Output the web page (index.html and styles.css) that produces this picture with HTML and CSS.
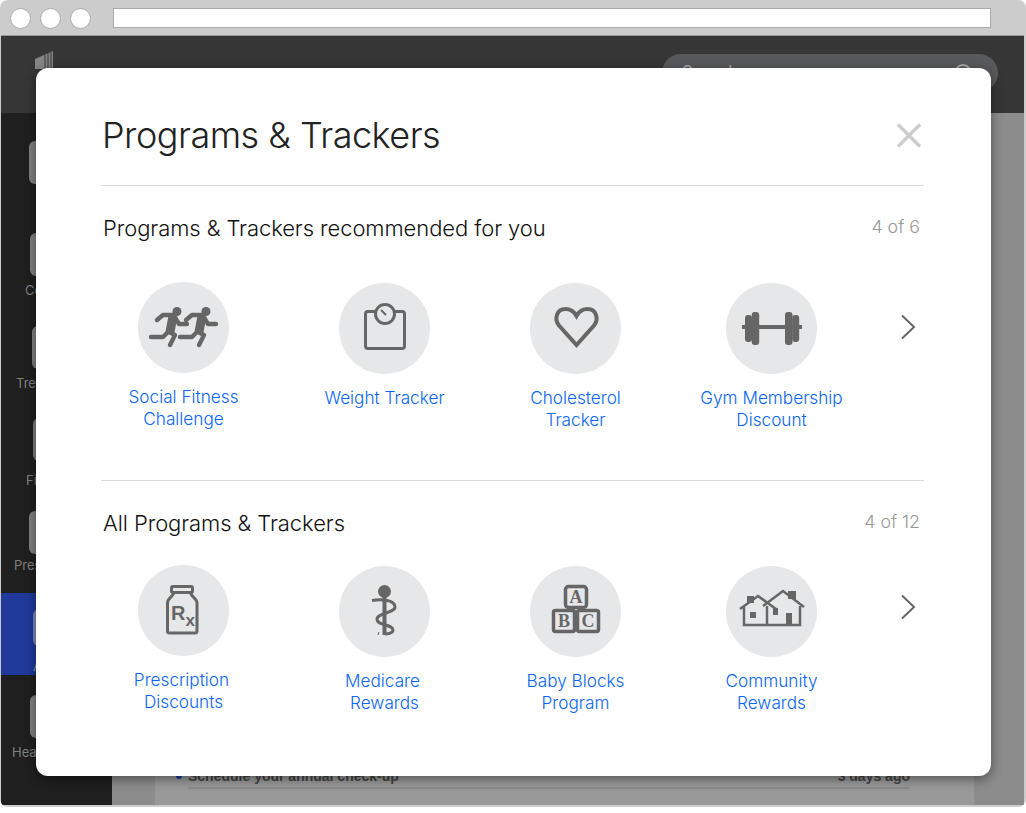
FILE: index.html
```html
<!DOCTYPE html>
<html lang="en">
<head>
    <meta charset="UTF-8">
    <meta name="viewport" content="width=device-width, initial-scale=1.0">
    <title>Programs &amp; Trackers</title>
    <link rel="stylesheet" href="styles.css">
</head>
<body>
    <div class="frame">
        <div class="chrome">
            <div class="dots">
                <span class="dot"></span>
                <span class="dot"></span>
                <span class="dot"></span>
            </div>
            <div class="url-bar"></div>
        </div>

        <div class="window">
            <header class="topbar">
                <svg class="logo" width="20" height="18" viewBox="0 0 20 18">
                    <polygon points="0,8 18,0 18,18 0,18" fill="#858585"/>
                    <path d="M10 4V18M13 2V18M16 1V18" stroke="#363637" stroke-width="1"/>
                </svg>
                <div class="search">
                    <span class="search-text">Search</span>
                    <span class="search-glass"></span>
                </div>
            </header>

            <div class="workspace">
                <nav class="sidebar">
                    <div class="nav-item nav-a"><span class="nav-icon"></span><span class="nav-label"></span></div>
                    <div class="nav-item nav-b"><span class="nav-icon"></span><span class="nav-label">Co</span></div>
                    <div class="nav-item nav-c"><span class="nav-icon"></span><span class="nav-label">Tre</span></div>
                    <div class="nav-item nav-d"><span class="nav-icon"></span><span class="nav-label">Fi</span></div>
                    <div class="nav-item nav-e"><span class="nav-icon"></span><span class="nav-label">Pres</span></div>
                    <div class="nav-item nav-active"><span class="nav-icon"></span><span class="nav-label">A</span></div>
                    <div class="nav-item nav-f"><span class="nav-icon"></span><span class="nav-label">Hea</span></div>
                </nav>
                <main class="content">
                    <div class="panel">
                        <div class="task">
                            <span class="task-dot"></span>
                            <span class="task-name">Schedule your annual check-up</span>
                            <span class="task-date">3 days ago</span>
                        </div>
                    </div>
                </main>
            </div>
        </div>

        <div class="modal">
            <div class="modal-head">
                <h1>Programs &amp; Trackers</h1>
                <svg class="close" width="26" height="25" viewBox="0 0 26 25">
                    <path d="M2 1.500L24 23.500M24 1.500L2 23.500" stroke="#ccc" stroke-width="3.200" fill="none"/>
                </svg>
            </div>

            <section class="section">
                <div class="section-head">
                    <h2>Programs &amp; Trackers recommended for you</h2>
                    <span class="count">4 of 6</span>
                </div>
                <div class="row">
                    <div class="grid">
                        <div class="item">
                            <div class="circle">
                                <svg width="91" height="91" viewBox="0 0 91 91">
                                    <g fill="none" stroke="#666" stroke-width="4.400" stroke-linecap="round" stroke-linejoin="round">
                                        <circle cx="39" cy="29.500" r="4.500" fill="#666" stroke="none"/>
                                        <path d="M19 38L25 33H36"/>
                                        <path d="M35 34L32 50" stroke-width="9" stroke-linecap="butt"/>
                                        <path d="M36 34L41 42H49"/>
                                        <path d="M33 47L25 55H13"/>
                                        <path d="M31 50L37 53L32 63"/>
                                    </g>
                                    <g fill="none" stroke="#666" stroke-width="4.400" stroke-linecap="round" stroke-linejoin="round" transform="translate(29 0)">
                                        <circle cx="39" cy="29.500" r="4.500" fill="#666" stroke="none"/>
                                        <path d="M19 38L25 33H36"/>
                                        <path d="M35 34L32 50" stroke-width="9" stroke-linecap="butt"/>
                                        <path d="M36 34L41 42H49"/>
                                        <path d="M33 47L25 55H13"/>
                                        <path d="M31 50L37 53L32 63"/>
                                    </g>
                                </svg>
                            </div>
                            <a class="label">Social Fitness<br>Challenge</a>
                        </div>
                        <div class="item">
                            <div class="circle">
                                <svg width="91" height="91" viewBox="0 0 91 91">
                                    <rect x="26.500" y="28.500" width="39" height="37" rx="2.500" fill="none" stroke="#666" stroke-width="3"/>
                                    <circle cx="46" cy="31" r="9.500" fill="#e6e7e8" stroke="#666" stroke-width="3"/>
                                    <path d="M42 27L47 32" stroke="#666" stroke-width="2"/>
                                </svg>
                            </div>
                            <a class="label">Weight Tracker</a>
                        </div>
                        <div class="item">
                            <div class="circle">
                                <svg width="91" height="91" viewBox="0 0 91 91">
                                    <path d="M46.500 62L29 42.500C24 36 26.500 26 35.500 26C40.500 26 44 28.500 46.500 33C49 28.500 52.500 26 57.500 26C66.500 26 69 36 64 42.500Z" fill="none" stroke="#666" stroke-width="4"/>
                                </svg>
                            </div>
                            <a class="label">Cholesterol<br>Tracker</a>
                        </div>
                        <div class="item">
                            <div class="circle">
                                <svg width="91" height="91" viewBox="0 0 91 91" fill="#666">
                                    <rect x="16" y="42" width="60" height="4"/>
                                    <rect x="19" y="32" width="7" height="27" rx="3"/>
                                    <rect x="25.700" y="29" width="7.500" height="33" rx="3"/>
                                    <rect x="59" y="29" width="7.500" height="33" rx="3"/>
                                    <rect x="66.200" y="32" width="7" height="27" rx="3"/>
                                </svg>
                            </div>
                            <a class="label">Gym Membership<br>Discount</a>
                        </div>
                    </div>
                    <svg class="next" width="16" height="26" viewBox="0 0 16 26">
                        <path d="M2 1.500L14 13L2 24.500" fill="none" stroke="#666" stroke-width="2"/>
                    </svg>
                </div>
            </section>

            <section class="section section-all">
                <div class="section-head">
                    <h2>All Programs &amp; Trackers</h2>
                    <span class="count">4 of 12</span>
                </div>
                <div class="row">
                    <div class="grid">
                        <div class="item">
                            <div class="circle">
                                <svg width="91" height="91" viewBox="0 0 91 91">
                                    <rect x="33.500" y="21.500" width="21" height="6" rx="1.500" fill="none" stroke="#666" stroke-width="3"/>
                                    <path d="M36 27.500C35 32 29.500 33 29.500 38V66C29.500 67.500 30.500 68 31.500 68H57C58 68 59 67.500 59 66V38C59 33 53 32 52.500 27.500" fill="none" stroke="#666" stroke-width="3"/>
                                    <text class="rx" x="33" y="55">R<tspan class="rx-x" dy="6">x</tspan></text>
                                </svg>
                            </div>
                            <a class="label"><span class="nudge">Prescription</span><br>Discounts</a>
                        </div>
                        <div class="item">
                            <div class="circle">
                                <svg width="91" height="91" viewBox="0 0 91 91">
                                    <circle cx="45.500" cy="25.500" r="6.500" fill="#666"/>
                                    <rect x="43.500" y="28" width="4" height="41" fill="#666"/>
                                    <path d="M33 34.500C43 33 56 34 56 41C56 47 38 47 38 53C38 60 54 58 54 64C54 67 49 68 46 68" fill="none" stroke="#666" stroke-width="3"/>
                                    <path d="M40 66L39 69" stroke="#666" stroke-width="1"/>
                                </svg>
                            </div>
                            <a class="label"><span class="nudge">Medicare</span><br>Rewards</a>
                        </div>
                        <div class="item">
                            <div class="circle">
                                <svg width="91" height="91" viewBox="0 0 91 91">
                                    <g fill="none" stroke="#666" stroke-width="3.500">
                                        <rect x="35.500" y="20.500" width="21" height="21" rx="3"/>
                                        <rect x="23.500" y="44.500" width="21" height="21" rx="2"/>
                                        <rect x="47.500" y="44.500" width="21" height="21" rx="2"/>
                                    </g>
                                    <text class="block-text" x="46" y="37">A</text>
                                    <text class="block-text" x="34" y="61">B</text>
                                    <text class="block-text" x="58" y="61">C</text>
                                </svg>
                            </div>
                            <a class="label">Baby Blocks<br>Program</a>
                        </div>
                        <div class="item">
                            <div class="circle">
                                <svg width="91" height="91" viewBox="0 0 91 91">
                                    <g fill="#666">
                                        <rect x="21" y="30" width="7" height="7"/>
                                        <rect x="24" y="46" width="6" height="6"/>
                                        <rect x="62" y="25" width="8" height="8"/>
                                        <rect x="60" y="47" width="6" height="12"/>
                                        <rect x="47" y="42" width="5" height="7"/>
                                    </g>
                                    <g fill="none" stroke="#666" stroke-width="2.500">
                                        <path d="M14 43L32 30L50 43"/>
                                        <path d="M18 41V59H74V40"/>
                                        <path d="M41 40V59"/>
                                        <path d="M37 40L57 25L78 41"/>
                                    </g>
                                </svg>
                            </div>
                            <a class="label">Community<br>Rewards</a>
                        </div>
                    </div>
                    <svg class="next" width="16" height="26" viewBox="0 0 16 26">
                        <path d="M2 1.500L14 13L2 24.500" fill="none" stroke="#666" stroke-width="2"/>
                    </svg>
                </div>
            </section>
        </div>
    </div>
</body>
</html>
```

FILE: styles.css
```css
body {
    margin: 0;
    background-color: #fff;
    font-family: Inter, "Liberation Sans", Arial, sans-serif;
}

.frame {
    position: relative;
    width: 1026px;
    height: 807px;
    background-color: #ccc;
    border-radius: 8px;
    overflow: hidden;
}

.chrome {
    display: flex;
    align-items: center;
    height: 35px;
    padding-left: 10px;
    padding-top: 1px;
    box-sizing: border-box;
}

.dots {
    display: flex;
    gap: 9px;
    width: 103px;
}

.dot {
    width: 21px;
    height: 21px;
    box-sizing: border-box;
    background-color: #fff;
    border: 1px solid #aaa;
    border-radius: 50%;
}

.url-bar {
    width: 878px;
    height: 20px;
    box-sizing: border-box;
    background-color: #fff;
    border: 1px solid #aaa;
}

.window {
    display: flex;
    flex-direction: column;
    width: 1023px;
    height: 770px;
    margin-left: 1px;
    border-top: 1px solid #999;
    box-sizing: border-box;
}

.topbar {
    display: flex;
    height: 77px;
    background-color: #363637;
    flex-shrink: 0;
}

.logo {
    margin: 15px 0 0 34px;
}

.search {
    display: flex;
    justify-content: space-between;
    width: 336px;
    height: 38px;
    margin: 18px 0 0 607px;
    padding: 8px 26px 0 20px;
    box-sizing: border-box;
    background-color: #58595b;
    border-radius: 19px;
}

.search-text {
    color: #aaa;
    font-size: 17px;
}

.search-glass {
    width: 14px;
    height: 14px;
    margin-top: 2px;
    border: 2px solid #aaa;
    border-radius: 50%;
}

.workspace {
    display: flex;
    flex: 1;
    min-height: 0;
}

.sidebar {
    width: 111px;
    padding-top: 28px;
    box-sizing: border-box;
    background-color: #1f1f1f;
}

.nav-item {
    display: flex;
    flex-direction: column;
    height: 92.4px;
    color: #7f7f7f;
    font-size: 13px;
}

.nav-icon {
    display: block;
    width: 30px;
    height: 43px;
    margin-bottom: 6px;
    background-color: #808080;
    border-radius: 6px;
}

.nav-label {
    line-height: 16px;
}

.nav-a { padding-left: 28px; }
.nav-b { padding-left: 24px; }
.nav-b .nav-icon { margin-left: 5px; }
.nav-c { padding-left: 15px; }
.nav-c .nav-icon { margin-left: 16px; }
.nav-d { padding-left: 25px; }
.nav-d .nav-icon { margin-left: 7px; margin-bottom: 11px; }
.nav-e { padding-left: 13px; }
.nav-e .nav-icon { margin-left: 15px; margin-bottom: 3px; }

.nav-active {
    height: 82px;
    margin-top: -10px;
    margin-bottom: 20px;
    padding-top: 16px;
    padding-left: 32px;
    box-sizing: border-box;
    background-color: #1f3a9a;
    color: #8090c0;
}

.nav-active .nav-icon {
    height: 37px;
    margin-bottom: 12px;
    background-color: #7a88b8;
}

.nav-f { padding-left: 11px; }
.nav-f .nav-icon { margin-left: 18px; }

.content {
    display: flex;
    flex: 1;
    padding-left: 43px;
    padding-right: 50px;
    background-color: #8c8c8c;
}

.panel {
    display: flex;
    flex: 1;
    flex-direction: column;
    justify-content: flex-end;
    background-color: #999;
}

.task {
    display: flex;
    align-items: center;
    margin: 0 64px 16px 33px;
    padding-bottom: 3px;
    line-height: 16px;
    font-family: "Liberation Sans", Arial, sans-serif;
    font-size: 14px;
    font-weight: bold;
    color: #444;
    border-bottom: 2px solid #8b8b8b;
    position: relative;
}

.task-dot {
    position: absolute;
    left: -12px;
    top: 5px;
    width: 6px;
    height: 6px;
    background-color: #1f3a9a;
    border-radius: 50%;
}

.task-date {
    margin-left: auto;
}

/* modal sits over the dimmed page */
.modal {
    position: absolute;
    left: 36px;
    top: 68px;
    width: 955px;
    height: 708px;
    padding: 0 67px 0 65px;
    box-sizing: border-box;
    background-color: #fff;
    border-radius: 12px;
    box-shadow: 0 3px 12px rgba(0,0,0,0.45);
    color: #111;
}

.modal-head {
    display: flex;
    justify-content: space-between;
    align-items: center;
    height: 118px;
    padding: 44px 2px 27px 1px;
    box-sizing: border-box;
    border-bottom: 1px solid #d9d9d9;
}

h1 {
    margin: 0;
    font-size: 36px;
    line-height: 44px;
    font-weight: 300;
    letter-spacing: -0.5px;
    color: #222;
}

.section {
    padding-top: 27px;
    padding-bottom: 49px;
    border-bottom: 1px solid #d9d9d9;
}

.section-all {
    border-bottom: none;
}

.section-head {
    display: flex;
    justify-content: space-between;
    align-items: center;
    height: 30px;
    margin-bottom: 40px;
    padding: 0 4px 0 2px;
}

.section-all .section-head {
    margin-bottom: 28px;
}

h2 {
    margin: 0;
    font-size: 22px;
    font-weight: 300;
    letter-spacing: -0.08px;
    color: #111;
}

.count {
    position: relative;
    top: -2px;
    font-size: 17.8px;
    font-weight: 300;
    color: #999;
}

.row {
    display: flex;
    margin-left: 2px;
}

.grid {
    display: grid;
    grid-template-columns: 201px 191px 196px 161px;
}

.item {
    display: flex;
    flex-direction: column;
    align-items: center;
    width: 161px;
}

.item:first-child {
    margin-top: -1px;
}

.circle {
    width: 91px;
    height: 91px;
    background-color: #e6e7e8;
    border-radius: 50%;
}

.circle svg {
    display: block;
}

.label {
    margin-top: 13px;
    text-align: center;
    font-size: 17.2px;
    font-weight: 300;
    line-height: 22px;
    color: #0a66f5;
}

.nudge {
    position: relative;
    left: -2px;
}

.next {
    margin: 31px 0 0 48px;
}

.section-all .next {
    margin-top: 28px;
}

.rx {
    font-family: "Liberation Sans", Arial, sans-serif;
    font-weight: bold;
    font-size: 20px;
    fill: #666;
}

.rx-x {
    font-size: 17px;
}

.block-text {
    font-family: "Liberation Serif", serif;
    font-weight: bold;
    font-size: 18px;
    text-anchor: middle;
    fill: #666;
}
```
